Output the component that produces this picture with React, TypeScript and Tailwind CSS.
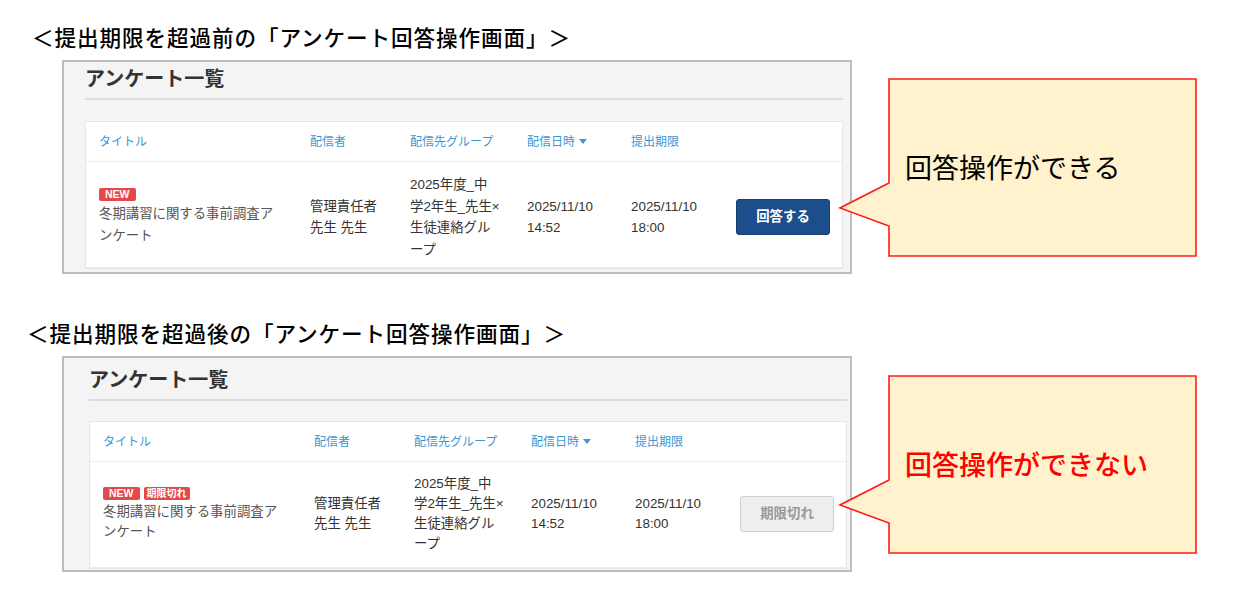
import React from "react";

/*
  Slide: survey answer screen before / after the submission deadline,
  each with a callout bubble on the right.
*/

const jpUi = "font-['Liberation_Sans','Noto_Sans_CJK_JP',sans-serif]";

function Badge({ children, wide }: { children: React.ReactNode; wide?: boolean }) {
  return (
    <span
      className={
        wide
          ? "inline-flex h-[13px] items-center rounded-[2px] bg-[#e5474b] px-[3px] text-[10px] font-bold leading-[13px] text-white"
          : "inline-flex h-[13px] items-center rounded-[2px] bg-[#e5474b] px-[6px] text-[10.5px] font-bold leading-[13px] text-white"
      }
    >
      {children}
    </span>
  );
}

function SortCaret() {
  return (
    <svg width="8" height="5" viewBox="0 0 8 5" className="ml-[4px] inline-block">
      <path d="M0 0 L8 0 L4 5 Z" fill="#3a97d4" />
    </svg>
  );
}

function SurveyPanel({ expired }: { expired?: boolean }) {
  const v = expired
    ? {
        wrap: "h-[216px] pl-[25px] pr-[3px] pt-[8px]",
        card: "mt-[20px]",
        row: "pt-[12px] pb-[13px] leading-[20px]",
      }
    : {
        wrap: "h-[214px] pl-[21px] pr-[7px] pt-[3px]",
        card: "mt-[21px]",
        row: "pt-[12px] pb-[7px] leading-[21.5px]",
      };

  return (
    <div className={`w-[790px] overflow-hidden border-2 border-[#bdbdbd] bg-[#f4f4f4] ${v.wrap} ${jpUi}`}>
      {/* page title */}
      <div className="border-b-2 border-[#dcdcdc] pb-[5px]">
        <h3 className="text-[20px] font-bold leading-[28px] text-[#333]">アンケート一覧</h3>
      </div>

      {/* list card */}
      <div className={`border border-[#e6e6e6] bg-white ${v.card}`}>
        <div className="grid h-[40px] grid-cols-[211px_100px_117px_104px_105px_1fr] items-center border-b border-[#ececec] pl-[13px] text-[12px] text-[#3a97d4]">
          <div>タイトル</div>
          <div>配信者</div>
          <div>配信先グループ</div>
          <div className="flex items-center">
            配信日時
            <SortCaret />
          </div>
          <div>提出期限</div>
          <div />
        </div>

        <div className={`grid grid-cols-[211px_100px_117px_104px_105px_1fr] items-center border-b border-[#ececec] pl-[13px] text-[13.4px] text-[#333] ${v.row}`}>
          <div>
            <div className="flex gap-[4px]">
              <Badge>NEW</Badge>
              {expired && <Badge wide>期限切れ</Badge>}
            </div>
            <div className="mt-[2px] whitespace-nowrap text-[#555]">
              冬期講習に関する事前調査ア
              <br />
              ンケート
            </div>
          </div>
          <div className="whitespace-nowrap">
            管理責任者
            <br />
            先生 先生
          </div>
          <div className="whitespace-nowrap">
            2025年度_中
            <br />
            学2年生_先生×
            <br />
            生徒連絡グル
            <br />
            ープ
          </div>
          <div>
            2025/11/10
            <br />
            14:52
          </div>
          <div>
            2025/11/10
            <br />
            18:00
          </div>
          <div>
            {expired ? (
              <button className="h-[36px] w-[94px] rounded-[3px] border border-[#d0d0d0] bg-[#eeeeee] text-[13.4px] font-bold text-[#9a9a9a]">
                期限切れ
              </button>
            ) : (
              <button className="h-[36px] w-[94px] rounded-[3px] border border-[#173f72] bg-[#1c4e8c] text-[13.4px] font-bold text-white">
                回答する
              </button>
            )}
          </div>
        </div>
      </div>
    </div>
  );
}

function Callout({ children, danger }: { children: React.ReactNode; danger?: boolean }) {
  return (
    <div className="relative h-[177px] w-[307px]">
      {/* bubble shape with tail pointing left */}
      <svg
        width="360"
        height="180"
        viewBox="-51 -1 360 180"
        className="absolute left-[-51px] top-[-1px]"
      >
        <path
          d="M0 0 L307 0 L307 177 L0 177 L0 147 L-49 129 L0 104 Z"
          fill="#fff2cc"
          stroke="#ff1a1a"
          strokeWidth="1.6"
        />
      </svg>
      <div
        className={
          danger
            ? "relative flex h-full items-center pl-[16px] font-['Noto_Sans_CJK_JP',sans-serif] text-[27px] font-medium text-[#ff0000]"
            : "relative flex h-full items-center pl-[16px] font-['Noto_Sans_CJK_JP',sans-serif] text-[27px] text-black"
        }
      >
        {children}
      </div>
    </div>
  );
}

export default function App() {
  return (
    <div className="h-[594px] w-[1236px] overflow-hidden bg-white">
      <h2 className="pl-[32px] pt-[22px] font-['Noto_Sans_CJK_JP',sans-serif] text-[21.6px] font-medium leading-[30px] tracking-[0.9px] text-black">
        ＜提出期限を超過前の「アンケート回答操作画面」＞
      </h2>
      <div className="mt-[8px] flex items-start">
        <div className="ml-[62px]">
          <SurveyPanel />
        </div>
        <div className="ml-[37px] mt-[19px]">
          <Callout>回答操作ができる</Callout>
        </div>
      </div>

      <h2 className="mt-[44px] pl-[27px] font-['Noto_Sans_CJK_JP',sans-serif] text-[21.6px] font-medium leading-[30px] tracking-[0.9px] text-black">
        ＜提出期限を超過後の「アンケート回答操作画面」＞
      </h2>
      <div className="mt-[8px] flex items-start">
        <div className="ml-[62px]">
          <SurveyPanel expired />
        </div>
        <div className="ml-[37px] mt-[20px]">
          <Callout danger>回答操作ができない</Callout>
        </div>
      </div>
    </div>
  );
}
